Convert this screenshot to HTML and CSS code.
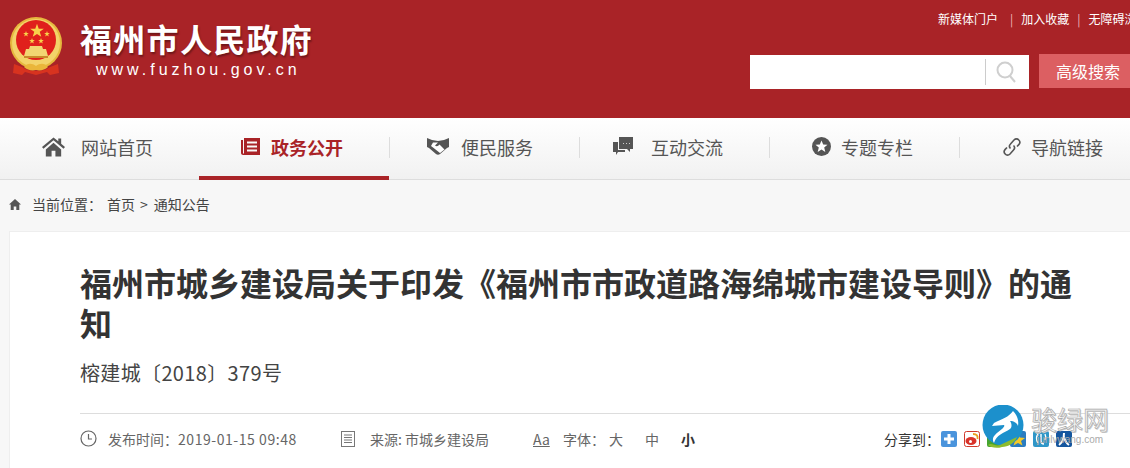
FILE: index.html
```html
<!DOCTYPE html>
<html>

<head>
    <meta charset="utf-8">
    <title>福州市城乡建设局关于印发《福州市市政道路海绵城市建设导则》的通知</title>
    <link rel="stylesheet" href="styles.css">
</head>

<body>

<header class="top">
    <div class="brand">
        <svg class="emblem" width="54" height="61" viewBox="0 0 54 61">
            <defs>
                <polygon id="star" points="0,-10 2.400,-3.200 9.500,-3.100 3.800,1.200 5.900,8.100 0,4 -5.900,8.100 -3.800,1.200 -9.500,-3.100 -2.400,-3.200" fill="#f8d24a"/>
            </defs>
            <circle cx="27" cy="26" r="26" fill="#e6b83e"/>
            <circle cx="27" cy="26" r="24" fill="#f3d36a"/>
            <circle cx="27" cy="23" r="20" fill="#e0201c"/>
            <use href="#star" transform="translate(28 14) scale(0.72)"/>
            <use href="#star" transform="translate(17 17) scale(0.3)"/>
            <use href="#star" transform="translate(38 17) scale(0.3)"/>
            <use href="#star" transform="translate(23 24) scale(0.3)"/>
            <use href="#star" transform="translate(32 24) scale(0.3)"/>
            <path d="M21 29h12l1 3h3l2 7H15l2-7h3z" fill="#f2d572"/>
            <rect x="15" y="39" width="24" height="2" fill="#c98a2a"/>
            <path d="M5 47l8 3c4 3 10 4 14 4s10-1 14-4l8-3 1 9-9 2-3-3-11 3-11-3-3 3-9-2z" fill="#d8331f"/>
            <path d="M15 50c3-4 8-4 12-1 4-3 9-3 12 1-3 3-8 4-12 3-4 1-9 0-12-3z" fill="#eab63a"/>
        </svg>
        <div class="brand_text">
            <div class="site_name">福州市人民政府</div>
            <div class="site_url">www.fuzhou.gov.cn</div>
        </div>
    </div>
    <div class="top_right">
        <div class="top_links">
            <a href="">新媒体门户</a><span>|</span><a href="">加入收藏</a><span>|</span><a href="">无障碍浏览</a>
        </div>
        <div class="search_row">
            <div class="search_box">
                <div class="search_input"></div>
                <svg class="search_icon" width="22" height="24" viewBox="0 0 22 24">
                    <circle cx="10" cy="10" r="7.500" fill="none" stroke="#cfcfcf" stroke-width="2"/>
                    <line x1="15" y1="16" x2="20" y2="22" stroke="#cfcfcf" stroke-width="2"/>
                </svg>
            </div>
            <a class="adv_search" href="">高级搜索</a>
        </div>
    </div>
</header>

<nav class="nav">
    <a class="nav_item" href="">
        <span class="nav_icon"><svg width="23" height="20" viewBox="0 0 24 20"><path d="M12 0 0 10l1.500 1.800L12 3l10.500 8.800L24 10l-4-3.400V1h-3v3zM4 12.500V20h6v-6h4v6h6v-7.500L12 5.500z" fill="#555"/></svg></span>
        网站首页
    </a>
    <a class="nav_item active" href="">
        <span class="nav_icon"><svg width="19" height="17" viewBox="0 0 19 17"><path d="M0 2h2v13c0 1 1 1 1 0V0h16v17H2c-1 0-2-1-2-2zM6 3.500v2h10v-2zM6 7.500v2h10v-2zM6 11.500v2h10v-2z" fill="#a92327" fill-rule="evenodd"/></svg></span>
        政务公开
    </a>
    <a class="nav_item" href="">
        <span class="nav_icon"><svg width="22" height="17" viewBox="0 0 22 17"><path d="M0 0l5 2 6 1 6-1 5-2v9l-2 1-7 6c-1 1-3 1-4 0L2 10 0 9z" fill="#555"/><path d="M6 4.500h5L8 7.500c1 1 2.500 1 3.500 0l1-1 5 5-4.500 3.500-7-5.500-2-1.500z" fill="#fff"/></svg></span>
        便民服务
    </a>
    <a class="nav_item" href="">
        <span class="nav_icon"><svg width="20" height="19" viewBox="0 0 20 19"><path d="M6 0h14v12h-3v3l-3-3H6z" fill="#555"/><path d="M0 5h5v8h7v2H5l-2 3v-3H0z" fill="#555"/><path d="M10 6h1v1h-1zM13 6h1v1h-1zM16 6h1v1h-1z" fill="#ccc"/></svg></span>
        互动交流
    </a>
    <a class="nav_item" href="">
        <span class="nav_icon"><svg width="19" height="19" viewBox="0 0 19 19"><circle cx="9.500" cy="9.500" r="9.500" fill="#555"/><polygon points="9.500,3.500 11.200,7.500 15.500,7.800 12.200,10.600 13.300,15 9.500,12.600 5.700,15 6.800,10.600 3.500,7.800 7.800,7.500" fill="#fff"/></svg></span>
        专题专栏
    </a>
    <a class="nav_item" href="">
        <span class="nav_icon"><svg width="18" height="18" viewBox="0 0 18 18"><g fill="none" stroke="#555" stroke-width="1.600"><path d="M7.500 10.500c-1.500-1.500-1.500-3 0-4.500l3.500-4c1.500-1.500 3.500-1.500 4.800 0 1.300 1.300 1.300 3.200 0 4.600L14 8.500"/><path d="M10.500 7.500c1.500 1.500 1.500 3 0 4.500l-3.500 4c-1.500 1.500-3.500 1.500-4.800 0-1.300-1.300-1.300-3.200 0-4.600L4 9.500"/></g></svg></span>
        导航链接
    </a>
</nav>

<div class="crumbs">
    <svg width="12" height="11" viewBox="0 0 12 11"><path d="M6 0 0 5.500h1.700V11h3V7.500h2.600V11h3V5.500H12z" fill="#555"/></svg>
    <span class="crumb_label">当前位置：</span>
    <a href="">首页</a>
    <span class="crumb_sep">&gt;</span>
    <a href="">通知公告</a>
</div>

<div class="card">
    <h1 class="title">福州市城乡建设局关于印发《福州市市政道路海绵城市建设导则》的通知</h1>
    <div class="doc_no">榕建城〔2018〕379号</div>
    <div class="meta">
        <div class="meta_item time">
            <svg width="17" height="17" viewBox="0 0 17 17"><circle cx="8.500" cy="8.500" r="7.500" fill="none" stroke="#666" stroke-width="1.200"/><path d="M8.500 4v5H12" fill="none" stroke="#666" stroke-width="1.200"/></svg>
            <span>发布时间：<span class="time_val">2019-01-15 09:48</span></span>
        </div>
        <div class="meta_item source">
            <svg width="14" height="16" viewBox="0 0 14 16"><rect x="0.500" y="0.500" width="13" height="15" fill="none" stroke="#777"/><path d="M3 4h8M3 6.500h8M3 9h8M3 11.500h8" stroke="#777"/></svg>
            来源: 市城乡建设局
        </div>
        <div class="meta_item size">
            <span class="aa">Aa</span>
            <span class="size_label">字体：</span>
            <a href="">大</a>
            <a href="">中</a>
            <a class="cur" href="">小</a>
        </div>
        <div class="share">
            <span class="share_label">分享到：</span>
            <svg width="16" height="16" viewBox="0 0 16 16"><rect width="16" height="16" rx="2" fill="#4a94dc"/><path d="M6.500 3h3v3.500H13v3H9.500V13h-3V9.500H3v-3h3.500z" fill="#fff"/></svg>
            <svg width="16" height="16" viewBox="0 0 16 16"><rect x="0.500" y="0.500" width="15" height="15" rx="2" fill="#fff" stroke="#d0392c"/><ellipse cx="7" cy="10" rx="5.500" ry="4" fill="#d9332a"/><circle cx="6.500" cy="10.500" r="1.500" fill="#fff"/><path d="M9 3c4 0 5 2 4.500 5" fill="none" stroke="#e8a020" stroke-width="1.800"/></svg>
            <svg width="16" height="16" viewBox="0 0 16 16"><rect width="16" height="16" rx="2" fill="#45a530"/><circle cx="6" cy="7" r="3.500" fill="#fff"/><circle cx="10.500" cy="9.500" r="2.500" fill="#dff3d8"/></svg>
            <svg width="16" height="16" viewBox="0 0 16 16"><rect width="16" height="16" rx="2" fill="#2a7cc0"/><polygon points="8,2 10,6.500 15,7 11,10 12.500,14.500 8,12 3.500,14.500 5,10 1,7 6,6.500" fill="#f6c926"/></svg>
            <svg width="16" height="16" viewBox="0 0 16 16"><rect width="16" height="16" rx="2" fill="#2f96c8"/><path d="M5 3c-2 3-2 6 0 9M8 3v7c0 2 1 3 3 3M12 3c1 2 1 4 0 6" fill="none" stroke="#fff" stroke-width="1.400"/></svg>
            <svg width="16" height="16" viewBox="0 0 16 16"><rect width="16" height="16" rx="2" fill="#15569e"/><path d="M8 2c0 5-1 9-5 12M8 6c1 4 2 6 5 8" fill="none" stroke="#fff" stroke-width="2"/></svg>
        </div>
    </div>
</div>

<div class="watermark">
    <svg width="44" height="44" viewBox="0 0 44 44">
        <circle cx="21" cy="20" r="20.500" fill="#1c90cc"/>
        <path d="M31 6C27 12 20 14 12 18l-2 3 12-1c2 2-5 6-9 10-2 2-3 5-1 8 2-8 10-10 16-14 2-2 2-5 0-8 4 0 7 2 8 5 1-6-1-11-5-15z" fill="#fff"/>
        <path d="M6 40c4-3 7 2 12 0l17-8c-2 6-9 10-15 10-6 2-12 0-14-2z" fill="#8dbb2e"/>
    </svg>
    <div class="wm_text">
        <div class="wm_name">骏绿网</div>
        <div class="wm_url">junlvwang.com</div>
    </div>
</div>

</body>

</html>
```

FILE: styles.css
```css
* {
    margin: 0px;
    box-sizing: border-box;
}

html, body {
    height: 100%;
    overflow: hidden;
}

body {
    position: relative;
    background-color: #f7f7f7;
    color: #333;
    font-family: "Noto Sans CJK SC", "Liberation Sans", sans-serif;
}

a {
    color: inherit;
    text-decoration: none;
}

.top {
    display: flex;
    justify-content: space-between;
    height: 118px;
    background-color: #a92327;
}

.brand {
    display: flex;
    align-items: flex-start;
    padding: 17px 0px 0px 9px;
}

.emblem {
    margin-right: 17px;
}

.brand_text {
    color: #fff;
}

.site_name {
    margin-top: -2px;
    font-size: 32px;
    font-weight: 700;
    line-height: 46px;
    letter-spacing: 1.300px;
    text-shadow: 1px 2px 2px rgba(0, 0, 0, 0.35);
}

.site_url {
    padding-left: 16px;
    font-family: "Liberation Sans", sans-serif;
    font-size: 16px;
    line-height: 18px;
    letter-spacing: 4px;
}

.top_right {
    width: 380px;
    flex-shrink: 0;
    overflow: hidden;
}

.top_links {
    display: flex;
    height: 55px;
    padding: 10px 0px 0px 188px;
    color: #fff;
    font-size: 12px;
    line-height: 18px;
    white-space: nowrap;
}

.top_links span {
    margin: 0px 8px;
    color: #f0b8b8;
}

.top_links a:first-child {
    margin-right: 4px;
}

.search_row {
    display: flex;
    width: 400px;
}

.search_box {
    display: flex;
    align-items: center;
    width: 279px;
    height: 34px;
    background-color: #fff;
}

.search_input {
    width: 236px;
    height: 26px;
    border-right: 1px solid #ccc;
}

.search_icon {
    margin-left: 9px;
}

.adv_search {
    width: 100px;
    height: 34px;
    margin: -1px 0px 0px 10px;
    padding-left: 17px;
    background-color: #dc5f62;
    color: #fff;
    font-size: 16px;
    line-height: 34px;
}

.nav {
    display: flex;
    height: 62px;
    padding-left: 9px;
    border-bottom: 1px solid #ddd;
    background-image: linear-gradient(to bottom, #fff, #f1f1f1);
}

.nav_item {
    position: relative;
    display: flex;
    flex-shrink: 0;
    align-items: center;
    width: 190px;
    height: 61px;
    padding-bottom: 4px;
    color: #555;
    font-size: 18px;
}

/* the text always starts 72px in, the icons sit at their own distance from it */
.nav_icon {
    display: flex;
    justify-content: flex-end;
    width: 72px;
}

.nav_item:nth-child(1) svg { margin-right: 16px; }
.nav_item:nth-child(2) svg { margin-right: 11px; }
.nav_item:nth-child(3) svg { margin-right: 12px; }
.nav_item:nth-child(4) svg { margin-right: 18px; }
.nav_item:nth-child(5) svg { margin-right: 10px; }
.nav_item:nth-child(6) svg { margin-right: 10px; }

.nav_item:nth-child(n+2):nth-child(-n+5)::after {
    content: "";
    position: absolute;
    top: 19px;
    right: -1px;
    width: 1px;
    height: 21px;
    background-color: #ddd;
}

.nav_item.active {
    height: 62px;
    padding-bottom: 1px;
    border-bottom: 4px solid #a92327;
    color: #a92327;
    font-weight: 700;
}

.crumbs {
    display: flex;
    align-items: center;
    height: 51px;
    padding: 0px 0px 3px 9px;
    color: #444;
    font-size: 14px;
}

.crumb_label {
    margin: 0px 5px 0px 11px;
}

.crumb_sep {
    margin: 0px 6px 0px 5px;
}

.card {
    height: 300px;
    margin-left: 9px;
    padding: 30px 0px 0px 70px;
    border-top: 1px solid #eee;
    border-left: 1px solid #eee;
    background-color: #fff;
}

.title {
    width: 1010px;
    color: #333;
    font-size: 32px;
    font-weight: 700;
    line-height: 40px;
}

.doc_no {
    margin-top: 16px;
    color: #444;
    font-size: 20px;
    line-height: 30px;
    letter-spacing: 0.350px;
}

.meta {
    display: flex;
    align-items: center;
    height: 50px;
    margin-top: 25px;
    border-top: 1px solid #ddd;
    color: #666;
    font-size: 14px;
}

.meta_item {
    display: flex;
    align-items: center;
}

.time {
    gap: 11px;
    width: 261px;
}

.time_val {
    letter-spacing: 0.550px;
}

.source {
    gap: 15px;
    width: 192px;
}

.size {
    width: 351px;
}

.aa {
    width: 30px;
    text-decoration: underline;
}

.size_label {
    width: 46px;
}

.size a {
    width: 36px;
}

.size a.cur {
    color: #333;
    font-weight: 700;
}

.share {
    display: flex;
    align-items: center;
    gap: 7px;
    color: #333;
    white-space: nowrap;
}

.share_label {
    width: 50px;
}

/* image watermark stamped over the screenshot corner */
.watermark {
    position: absolute;
    top: 405px;
    left: 982px;
    display: flex;
}

.wm_text {
    margin-left: 5px;
    text-align: center;
}

.wm_name {
    color: #f4f4f4;
    font-size: 26px;
    font-weight: 400;
    line-height: 28px;
    -webkit-text-stroke: 0.600px #a5a5a5;
    text-shadow: 1px 1px 0px #ccc;
}

.wm_url {
    margin-top: 1px;
    color: #aaa;
    font-family: "Liberation Sans", sans-serif;
    font-size: 10px;
    line-height: 12px;
}
```
